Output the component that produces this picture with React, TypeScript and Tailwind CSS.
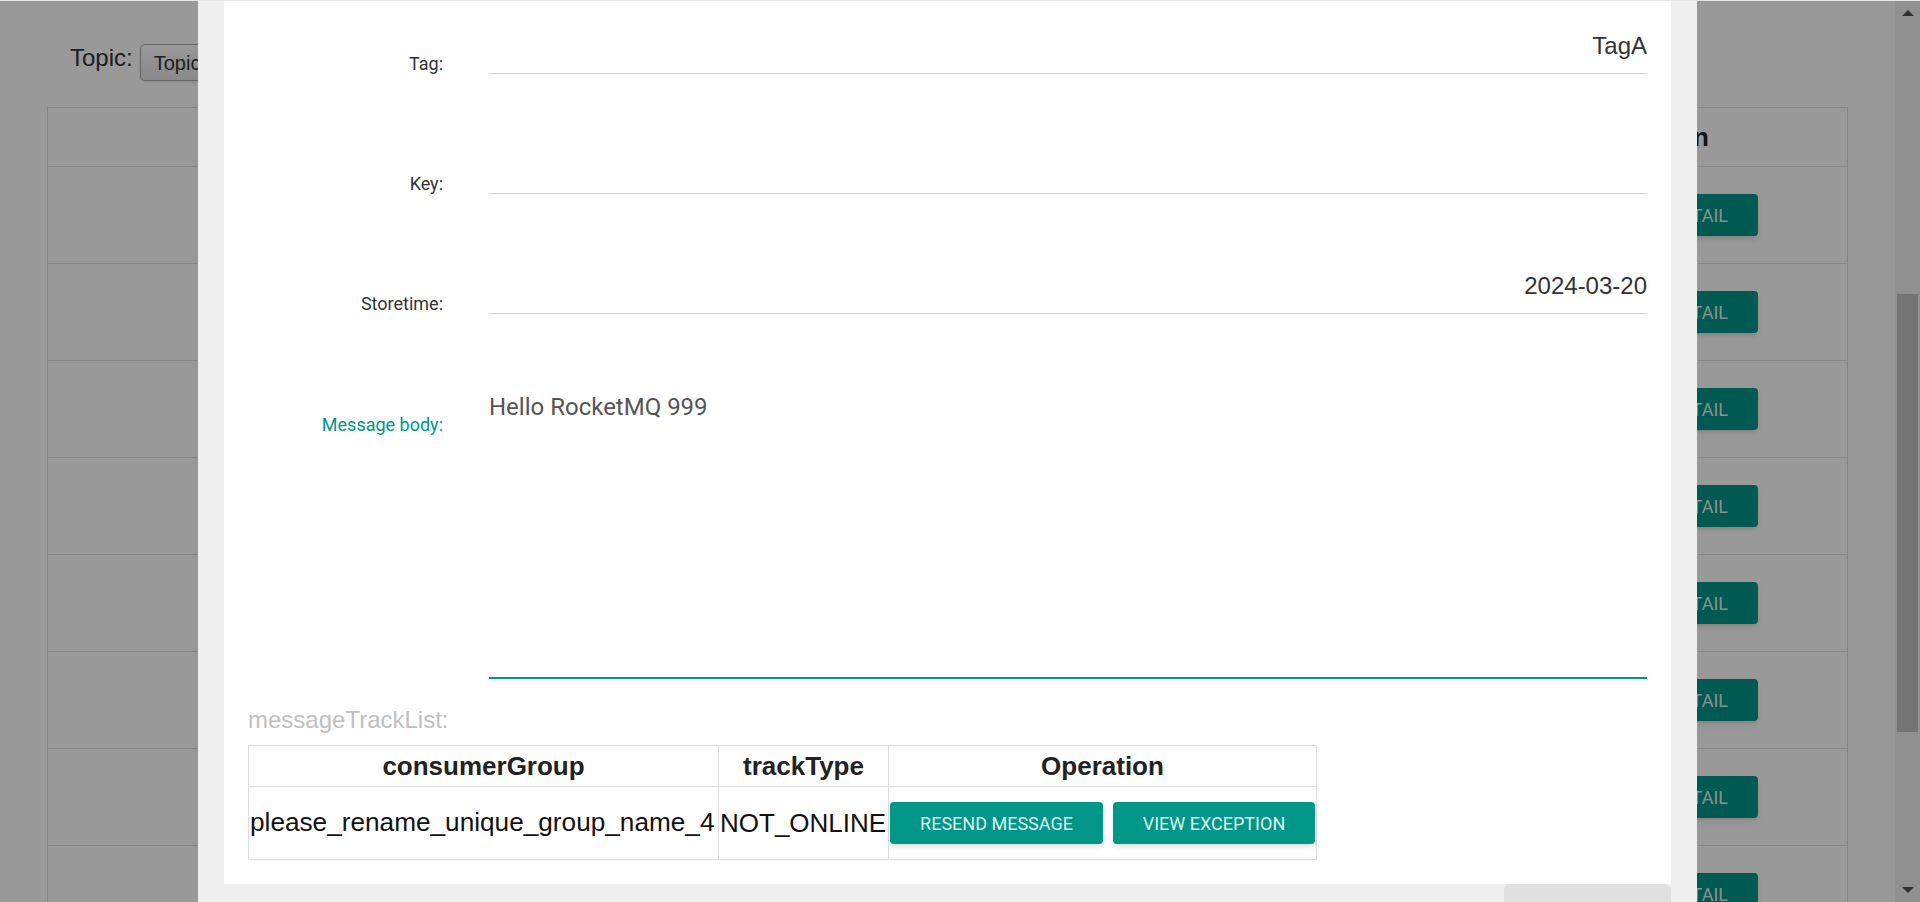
import React from "react";

const sans = "font-['Liberation_Sans',Arial,sans-serif]";
const roboto = "font-['Roboto','Liberation_Sans',sans-serif]";

const bgRows = [1, 2, 3, 4, 5, 6, 7, 8];

function BackgroundPage() {
    return (
        <div className="flex h-[902px] w-full bg-white overflow-hidden">
            <div className="flex-1 min-w-0 overflow-hidden">
                <div className="flex items-start pl-[70px] pt-[44px]">
                    <span className={`${sans} text-[24px] leading-[28px] text-[#333]`}>Topic:</span>
                    <div className={`${sans} ml-[7px] flex h-[37px] w-[320px] items-center rounded-[5px] border border-[#aaa] bg-gradient-to-b from-white to-[#e4e4e4] pl-[13px] text-[20px] text-[#333] shadow-sm`}>
                        TopicTest
                    </div>
                </div>
                <table className={`${sans} ml-[47px] mt-[26px] w-[1800px] border-collapse table-fixed`}>
                    <thead>
                        <tr className="h-[59px]">
                            <th className="w-[600px] border border-[#dcdcdc] text-[24px] font-bold text-[#222]">Message ID</th>
                            <th className="w-[200px] border border-[#dcdcdc] text-[24px] font-bold text-[#222]">Tag</th>
                            <th className="w-[200px] border border-[#dcdcdc] text-[24px] font-bold text-[#222]">Key</th>
                            <th className="w-[400px] border border-[#dcdcdc] text-[24px] font-bold text-[#222]">StoreTime</th>
                            <th className="w-[400px] border border-[#dcdcdc] text-[26px] font-bold text-[#222]">Operation</th>
                        </tr>
                    </thead>
                    <tbody>
                        {bgRows.map((r) => (
                            <tr key={r} className="h-[97px]">
                                <td className="border border-[#dcdcdc]"></td>
                                <td className="border border-[#dcdcdc]"></td>
                                <td className="border border-[#dcdcdc]"></td>
                                <td className="border border-[#dcdcdc]"></td>
                                <td className="border border-[#dcdcdc]">
                                    <div className="flex justify-end pr-[89px]">
                                        <button className={`${roboto} h-[42px] rounded-[4px] bg-[#009688] px-[30px] text-[18px] text-[#dff3f0] shadow-md`}>
                                            DETAIL
                                        </button>
                                    </div>
                                </td>
                            </tr>
                        ))}
                    </tbody>
                </table>
            </div>
            {/* page scrollbar */}
            <div className="flex w-[25px] shrink-0 flex-col bg-[#f1f1f1]">
                <div className="flex h-[25px] items-center justify-center">
                    <div className="h-0 w-0 border-x-[6px] border-b-[6px] border-x-transparent border-b-[#505050]"></div>
                </div>
                <div className="flex-1">
                    <div className="ml-[2px] mt-[269px] h-[438px] w-[21px] bg-[#c1c1c1]"></div>
                </div>
                <div className="flex h-[25px] items-center justify-center">
                    <div className="h-0 w-0 border-x-[6px] border-t-[6px] border-x-transparent border-t-[#505050]"></div>
                </div>
            </div>
        </div>
    );
}

function FieldRow({ label, value, first }: { label: string; value: string; first?: boolean }) {
    return (
        <div className={`flex items-end ${first ? "" : "mt-[78px]"}`}>
            <div className={`${roboto} mb-[1px] w-[219px] shrink-0 text-right text-[18px] leading-[18px] text-[#333]`}>{label}</div>
            <div className={`${sans} ml-[46px] mr-[24px] flex-1 border-b border-[#d0d0d0] pb-[13px] text-right text-[24px] leading-[28px] text-[#333]`}>
                {value || "\u00a0"}
            </div>
        </div>
    );
}

function MessageModal() {
    return (
        <div className="absolute left-[198px] top-0 h-[902px] w-[1499px] bg-[#efefef] px-[26px]">
            <div className="h-[884px] overflow-hidden bg-white pt-[32px]">
                <FieldRow label="Tag:" value="TagA" first />
                <FieldRow label="Key:" value="" />
                <FieldRow label="Storetime:" value="2024-03-20" />

                <div className="mt-[76px] flex items-start">
                    <div className={`${roboto} mt-[26px] w-[219px] shrink-0 text-right text-[18px] leading-[18px] text-[#009688]`}>
                        Message body:
                    </div>
                    <div className={`${roboto} ml-[46px] mr-[24px] h-[289px] flex-1 border-b-2 border-[#009688] pt-[1px] text-[24px] leading-[32px] text-[#555]`}>
                        Hello RocketMQ 999
                    </div>
                </div>

                <div className={`${sans} ml-[24px] mt-[27px] text-[24px] leading-[28px] text-[#c0c0c0]`}>messageTrackList:</div>

                <table className={`${sans} ml-[24px] mt-[11px] border-collapse`}>
                    <thead>
                        <tr className="h-[41px]">
                            <th className="w-[470px] border border-[#dddddd] text-center text-[26px] font-bold text-[#222]">consumerGroup</th>
                            <th className="w-[170px] border border-[#dddddd] text-center text-[26px] font-bold text-[#222]">trackType</th>
                            <th className="w-[428px] border border-[#dddddd] text-center text-[26px] font-bold text-[#222]">Operation</th>
                        </tr>
                    </thead>
                    <tbody>
                        <tr className="h-[73px]">
                            <td className="whitespace-nowrap border border-[#dddddd] pl-[1px] text-left text-[26.2px] text-[#111]">please_rename_unique_group_name_4</td>
                            <td className="whitespace-nowrap border border-[#dddddd] pl-[1px] text-left text-[26px] text-[#111]">NOT_ONLINE</td>
                            <td className="border border-[#dddddd] px-[1px]">
                                <div className="flex items-center gap-[10px]">
                                    <button className={`${roboto} h-[42px] w-[213px] rounded-[4px] bg-[#009688] text-[18px] text-[#dff3f0] shadow-md`}>
                                        RESEND MESSAGE
                                    </button>
                                    <button className={`${roboto} h-[42px] w-[202px] rounded-[4px] bg-[#009688] text-[18px] text-[#dff3f0] shadow-md`}>
                                        VIEW EXCEPTION
                                    </button>
                                </div>
                            </td>
                        </tr>
                    </tbody>
                </table>
            </div>
            <div className="flex h-[18px] justify-end">
                <div className="h-[18px] w-[167px] rounded-t-[6px] bg-[#e0e0e0]"></div>
            </div>
        </div>
    );
}

export default function App() {
    return (
        <div className="relative h-[902px] w-[1920px] overflow-hidden">
            <BackgroundPage />
            <div className="absolute inset-0 bg-black/40"></div>
            <MessageModal />
            <div className="absolute left-0 right-0 top-0 h-px bg-[#e6e6e6]"></div>
        </div>
    );
}
